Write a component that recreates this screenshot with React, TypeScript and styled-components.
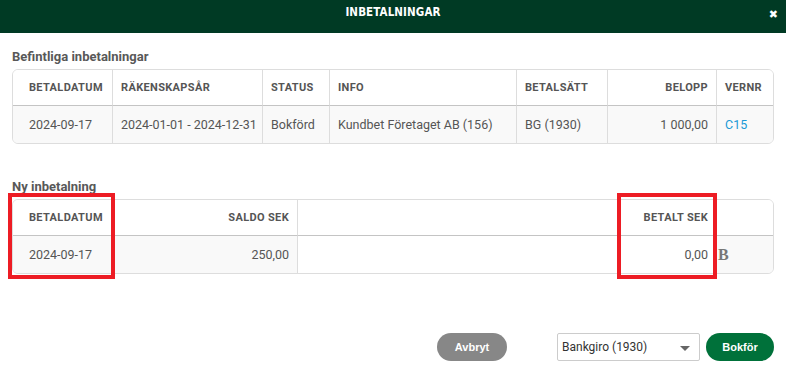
import React from "react";
import styled, { createGlobalStyle } from "styled-components";

const Global = createGlobalStyle`
  html, body { margin: 0; padding: 0; background: #fff; }
  body { font-family: Roboto, "Liberation Sans", Arial, sans-serif; }
  * { box-sizing: border-box; }
`;

const Dialog = styled.div`
  width: 786px;
  height: 376px;
  background: #fff;
  display: flex;
  flex-direction: column;
`;

const TitleBar = styled.div`
  height: 33px;
  background: #003a24;
  position: relative;
  display: flex;
  align-items: flex-start;
  justify-content: center;
  padding-top: 6px;
`;

const Title = styled.div`
  color: #fff;
  font-family: "DejaVu Sans Condensed", "DejaVu Sans", sans-serif;
  font-stretch: condensed;
  font-weight: bold;
  font-size: 11.5px;
  letter-spacing: 0.1px;
  line-height: 13px;
`;

const Close = styled.button`
  position: absolute;
  right: 8px;
  top: 9px;
  background: none;
  border: none;
  padding: 0;
  color: #fff;
  font-size: 11px;
  line-height: 12px;
  font-family: "DejaVu Sans", sans-serif;
  cursor: pointer;
`;

const Body = styled.div`
  padding: 0 12px;
  display: flex;
  flex-direction: column;
`;

const SectionTitle = styled.div<{ $top: number }>`
  margin-top: ${(p) => p.$top}px;
  margin-bottom: 4px;
  font-size: 13px;
  line-height: 16px;
  font-weight: 700;
  color: #585858;
`;

const TableWrap = styled.div`
  position: relative;
`;

const Table = styled.div<{ $cols: string }>`
  display: grid;
  grid-template-columns: ${(p) => p.$cols};
  border: 1px solid #ddd;
  border-radius: 6px;
  overflow: hidden;
`;

const HeadCell = styled.div<{ $right?: boolean; $first?: boolean; $divider?: boolean }>`
  height: 36px;
  display: flex;
  align-items: center;
  justify-content: ${(p) => (p.$right ? "flex-end" : "flex-start")};
  padding: 0 8px 0 ${(p) => (p.$first ? 16 : 8)}px;
  border-bottom: 1px solid #c4c4c4;
  border-left: ${(p) => (p.$divider ? "1px solid #ddd" : "none")};
  font-size: 11px;
  font-weight: 700;
  letter-spacing: 0.35px;
  color: #555;
  background: #fff;
  white-space: nowrap;
`;

const BodyCell = styled.div<{ $right?: boolean; $first?: boolean; $divider?: boolean; $white?: boolean }>`
  height: 37px;
  display: flex;
  align-items: center;
  justify-content: ${(p) => (p.$right ? "flex-end" : "flex-start")};
  padding: 0 8px 0 ${(p) => (p.$first ? 16 : 8)}px;
  border-left: ${(p) => (p.$divider ? "1px solid #ddd" : "none")};
  font-size: 12.5px;
  color: #555;
  background: ${(p) => (p.$white ? "#fff" : "#f9f9f9")};
  white-space: nowrap;
`;

const Link = styled.a`
  color: #1a9ad6;
  text-decoration: none;
`;

const BoldB = styled.span`
  font-family: "Liberation Serif", "DejaVu Serif", serif;
  font-weight: 700;
  font-size: 16px;
  color: #777;
  margin-left: -6px;
`;

const Highlight = styled.div<{ $left: number; $width: number }>`
  position: absolute;
  top: -6px;
  left: ${(p) => p.$left}px;
  width: ${(p) => p.$width}px;
  height: 86px;
  border: 4px solid #ed1c24;
  pointer-events: none;
`;

const Footer = styled.div`
  margin-top: 59px;
  padding: 0 12px;
  display: flex;
  justify-content: flex-end;
  align-items: center;
`;

const Pill = styled.button<{ $bg: string }>`
  height: 28px;
  border: none;
  border-radius: 14px;
  background: ${(p) => p.$bg};
  color: #fff;
  font-family: "Liberation Sans", Arial, sans-serif;
  font-weight: 700;
  font-size: 11px;
  padding: 0;
  cursor: pointer;
`;

const SelectBox = styled.div`
  width: 143px;
  height: 28px;
  margin-left: 50px;
  margin-right: 6px;
  border: 1px solid #ccc;
  border-radius: 2px;
  display: flex;
  align-items: center;
  justify-content: space-between;
  padding: 0 9px 0 4px;
  font-size: 12px;
  color: #333;
  background: #fff;
`;

const Caret = styled.span`
  width: 0;
  height: 0;
  border-left: 5px solid transparent;
  border-right: 5px solid transparent;
  border-top: 5px solid #666;
  margin-top: 2px;
`;

const rows1 = ["99px", "150px", "67px", "187px", "91px", "109px", "1fr"].join(" ");
const rows2 = ["101px", "183px", "322px", "97px", "1fr"].join(" ");

export default function App() {
  return (
    <>
      <Global />
      <Dialog>
        <TitleBar>
          <Title>INBETALNINGAR</Title>
          <Close aria-label="Stäng">✖</Close>
        </TitleBar>
        <Body>
          <SectionTitle $top={16}>Befintliga inbetalningar</SectionTitle>
          <Table $cols={rows1}>
            <HeadCell $first>BETALDATUM</HeadCell>
            <HeadCell $divider>RÄKENSKAPSÅR</HeadCell>
            <HeadCell $divider>STATUS</HeadCell>
            <HeadCell $divider>INFO</HeadCell>
            <HeadCell $divider>BETALSÄTT</HeadCell>
            <HeadCell $divider $right>BELOPP</HeadCell>
            <HeadCell $divider>VERNR</HeadCell>
            <BodyCell $first>2024-09-17</BodyCell>
            <BodyCell $divider>2024-01-01 - 2024-12-31</BodyCell>
            <BodyCell $divider>Bokförd</BodyCell>
            <BodyCell $divider>Kundbet Företaget AB (156)</BodyCell>
            <BodyCell $divider>BG (1930)</BodyCell>
            <BodyCell $divider $right>1 000,00</BodyCell>
            <BodyCell $divider>
              <Link href="#">C15</Link>
            </BodyCell>
          </Table>

          <SectionTitle $top={35}>Ny inbetalning</SectionTitle>
          <TableWrap>
            <Table $cols={rows2}>
              <HeadCell $first>BETALDATUM</HeadCell>
              <HeadCell $right>SALDO SEK</HeadCell>
              <HeadCell $divider />
              <HeadCell $divider $right>BETALT SEK</HeadCell>
              <HeadCell />
              <BodyCell $first>2024-09-17</BodyCell>
              <BodyCell $right>250,00</BodyCell>
              <BodyCell $divider $white />
              <BodyCell $divider $right $white>0,00</BodyCell>
              <BodyCell>
                <BoldB>B</BoldB>
              </BodyCell>
            </Table>
            <Highlight $left={-4} $width={107} />
            <Highlight $left={605} $width={100} />
          </TableWrap>
        </Body>
        <Footer>
          <Pill $bg="#878787" style={{ width: 70 }}>Avbryt</Pill>
          <SelectBox>
            <span>Bankgiro (1930)</span>
            <Caret />
          </SelectBox>
          <Pill $bg="#00713a" style={{ width: 68 }}>Bokför</Pill>
        </Footer>
      </Dialog>
    </>
  );
}
